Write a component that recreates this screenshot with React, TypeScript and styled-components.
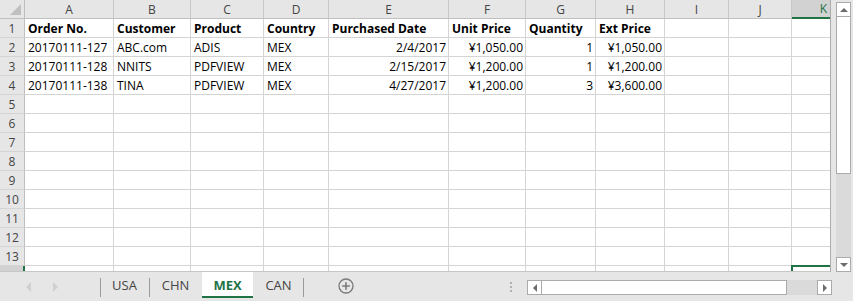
import styled, { createGlobalStyle, css } from 'styled-components'

const GlobalStyle = createGlobalStyle`
  html, body {
    margin: 0;
    padding: 0;
    background: #ffffff;
  }
  body {
    font-family: 'Segoe UI', 'Open Sans', 'Noto Sans', sans-serif;
  }
`

const GREEN = '#217346'

const columns = [
  { key: 'A', width: 89 },
  { key: 'B', width: 77 },
  { key: 'C', width: 73 },
  { key: 'D', width: 65 },
  { key: 'E', width: 120 },
  { key: 'F', width: 77 },
  { key: 'G', width: 70 },
  { key: 'H', width: 69 },
  { key: 'I', width: 64 },
  { key: 'J', width: 63 },
  { key: 'K', width: 39 },
]

type Cell = { text: string; right?: boolean }

const rows: Cell[][] = [
  [
    { text: 'Order No.' },
    { text: 'Customer' },
    { text: 'Product' },
    { text: 'Country' },
    { text: 'Purchased Date' },
    { text: 'Unit Price' },
    { text: 'Quantity' },
    { text: 'Ext Price' },
  ],
  [
    { text: '20170111-127' },
    { text: 'ABC.com' },
    { text: 'ADIS' },
    { text: 'MEX' },
    { text: '2/4/2017', right: true },
    { text: '¥1,050.00', right: true },
    { text: '1', right: true },
    { text: '¥1,050.00', right: true },
  ],
  [
    { text: '20170111-128' },
    { text: 'NNITS' },
    { text: 'PDFVIEW' },
    { text: 'MEX' },
    { text: '2/15/2017', right: true },
    { text: '¥1,200.00', right: true },
    { text: '1', right: true },
    { text: '¥1,200.00', right: true },
  ],
  [
    { text: '20170111-138' },
    { text: 'TINA' },
    { text: 'PDFVIEW' },
    { text: 'MEX' },
    { text: '4/27/2017', right: true },
    { text: '¥1,200.00', right: true },
    { text: '3', right: true },
    { text: '¥3,600.00', right: true },
  ],
]

const tabs = [
  { name: 'USA', width: 49 },
  { name: 'CHN', width: 53 },
  { name: 'MEX', width: 51 },
  { name: 'CAN', width: 51 },
]
const ACTIVE_TAB = 'MEX'
const ROW_COUNT = 14

const App = () => {
  return (
    <>
      <GlobalStyle />
      <Window>
        <Main>
          <Sheet>
            <Grid $cols={columns.map((c) => c.width)}>
              <Corner>
                <CornerTriangle />
              </Corner>
              {columns.map((c) => (
                <ColHeader key={c.key} $selected={c.key === 'K'}>
                  {c.key}
                </ColHeader>
              ))}
              {Array.from({ length: ROW_COUNT }).map((_, r) => {
                const data = rows[r] || []
                const rowNo = r + 1
                return [
                  <RowHeader key={`h${rowNo}`} $selected={rowNo === 14}>
                    {rowNo}
                  </RowHeader>,
                  ...columns.map((c, ci) => {
                    const cell = data[ci]
                    return (
                      <DataCell
                        key={`${rowNo}-${c.key}`}
                        $bold={rowNo === 1}
                        $right={!!cell?.right}
                        $active={rowNo === 14 && c.key === 'K'}
                      >
                        {cell?.text}
                      </DataCell>
                    )
                  }),
                ]
              })}
            </Grid>
          </Sheet>
          <VScroll>
            <ScrollButton>
              <ArrowUp />
            </ScrollButton>
            <VThumb />
            <VTrack />
            <ScrollButton>
              <ArrowDown />
            </ScrollButton>
          </VScroll>
        </Main>
        <TabBar>
          <NavArrows>
            <NavLeft />
            <NavRight />
          </NavArrows>
          <Tabs>
            {tabs.map((t) => (
              <Tab key={t.name} $width={t.width} $active={t.name === ACTIVE_TAB}>
                {t.name}
              </Tab>
            ))}
          </Tabs>
          <AddSheet>
            <svg width="16" height="16" viewBox="0 0 16 16">
              <circle cx="8" cy="8" r="7" fill="none" stroke="#7a7a7a" strokeWidth="1.3" />
              <path d="M8 4.2v7.6M4.2 8h7.6" stroke="#7a7a7a" strokeWidth="1.6" />
            </svg>
          </AddSheet>
          <Spacer />
          <Splitter>
            <Dot />
            <Dot />
            <Dot />
          </Splitter>
          <HScroll>
            <HButton>
              <ArrowLeft />
            </HButton>
            <HThumb />
            <HTrack />
            <HButton>
              <ArrowRight />
            </HButton>
          </HScroll>
          <TailGap />
        </TabBar>
      </Window>
    </>
  )
}

export default App

const Window = styled.div`
  width: 853px;
  height: 301px;
  display: flex;
  flex-direction: column;
  background: #e6e6e6;
  overflow: hidden;
`

const Main = styled.div`
  display: flex;
  height: 272px;
  flex: none;
`

const Sheet = styled.div`
  width: 831px;
  height: 272px;
  overflow: hidden;
  background: #ffffff;
  border-right: 1px solid #ababab;
  border-bottom: 1px solid #c6c6c6;
  box-sizing: border-box;
`

const Grid = styled.div<{ $cols: number[] }>`
  display: grid;
  grid-template-columns: 25px ${(p) => p.$cols.map((w) => `${w}px`).join(' ')};
  grid-template-rows: 19px;
  grid-auto-rows: 19px;
  width: 831px;
`

const headerBase = css`
  background: #e6e6e6;
  color: #444444;
  font-size: 12px;
  display: flex;
  align-items: center;
  justify-content: center;
  box-sizing: border-box;
`

const Corner = styled.div`
  ${headerBase};
  position: relative;
  border-right: 1px solid #bfbfbf;
  border-bottom: 1px solid #bfbfbf;
`

const CornerTriangle = styled.div`
  position: absolute;
  right: 3px;
  bottom: 3px;
  width: 0;
  height: 0;
  border-left: 11px solid transparent;
  border-bottom: 11px solid #bfbfbf;
`

const ColHeader = styled.div<{ $selected?: boolean }>`
  ${headerBase};
  border-right: 1px solid #c8c8c8;
  border-bottom: 1px solid #bfbfbf;
  ${(p) =>
    p.$selected &&
    css`
      background: #d2d2d2;
      color: ${GREEN};
      border-bottom: 2px solid ${GREEN};
      justify-content: flex-end;
      padding-right: 3px;
    `}
`

const RowHeader = styled.div<{ $selected?: boolean }>`
  ${headerBase};
  border-right: 1px solid #bfbfbf;
  border-bottom: 1px solid #d4d4d4;
  ${(p) =>
    p.$selected &&
    css`
      background: #d2d2d2;
      color: ${GREEN};
      border-right: 2px solid ${GREEN};
    `}
`

const DataCell = styled.div<{ $bold?: boolean; $right?: boolean; $active?: boolean }>`
  box-sizing: border-box;
  border-right: 1px solid #d4d4d4;
  border-bottom: 1px solid #d4d4d4;
  font-size: 12px;
  color: #000000;
  padding: 1px 2px 0 3px;
  display: flex;
  align-items: center;
  white-space: nowrap;
  overflow: hidden;
  justify-content: ${(p) => (p.$right ? 'flex-end' : 'flex-start')};
  font-weight: ${(p) => (p.$bold ? 700 : 400)};
  ${(p) =>
    p.$active &&
    css`
      border-top: 2px solid ${GREEN};
      border-left: 2px solid ${GREEN};
      margin-top: -1px;
      margin-left: -1px;
    `}
`

const VScroll = styled.div`
  width: 22px;
  display: flex;
  flex-direction: column;
  align-items: center;
  padding: 2px 0 0 3px;
  box-sizing: border-box;
  background: #e6e6e6;
`

const buttonBase = css`
  width: 15px;
  height: 15px;
  box-sizing: border-box;
  background: #ffffff;
  border: 1px solid #ababab;
  display: flex;
  align-items: center;
  justify-content: center;
  flex: none;
`

const ScrollButton = styled.div`
  ${buttonBase};
`

const VThumb = styled.div`
  width: 15px;
  height: 157px;
  box-sizing: border-box;
  background: #ffffff;
  border: 1px solid #ababab;
  border-top: none;
  flex: none;
`

const VTrack = styled.div`
  width: 15px;
  flex: 1;
  background: #dadada;
`

const ArrowUp = styled.div`
  width: 0;
  height: 0;
  border-left: 4px solid transparent;
  border-right: 4px solid transparent;
  border-bottom: 4px solid #6d6d6d;
`

const ArrowDown = styled.div`
  width: 0;
  height: 0;
  border-left: 4px solid transparent;
  border-right: 4px solid transparent;
  border-top: 4px solid #6d6d6d;
`

const ArrowLeft = styled.div`
  width: 0;
  height: 0;
  border-top: 4px solid transparent;
  border-bottom: 4px solid transparent;
  border-right: 4px solid #6d6d6d;
`

const ArrowRight = styled.div`
  width: 0;
  height: 0;
  border-top: 4px solid transparent;
  border-bottom: 4px solid transparent;
  border-left: 4px solid #6d6d6d;
`

const TabBar = styled.div`
  flex: 1;
  display: flex;
  align-items: stretch;
  background: #e6e6e6;
`

const NavArrows = styled.div`
  width: 100px;
  display: flex;
  align-items: center;
  padding-left: 26px;
  gap: 22px;
  box-sizing: border-box;
`

const NavLeft = styled.div`
  width: 0;
  height: 0;
  border-top: 5px solid transparent;
  border-bottom: 5px solid transparent;
  border-right: 5px solid #cfcfcf;
`

const NavRight = styled.div`
  width: 0;
  height: 0;
  border-top: 5px solid transparent;
  border-bottom: 5px solid transparent;
  border-left: 5px solid #cfcfcf;
`

const Tabs = styled.div`
  display: flex;
  align-items: flex-start;
`

const Tab = styled.div<{ $active?: boolean; $width: number }>`
  position: relative;
  width: ${(p) => p.$width}px;
  height: 26px;
  display: flex;
  align-items: center;
  justify-content: center;
  font-size: 13px;
  color: #444444;
  box-sizing: border-box;
  &::before {
    content: '';
    position: absolute;
    left: 0;
    top: 6px;
    height: 19px;
    width: 1px;
    background: #9b9b9b;
  }
  &:last-child::after {
    content: '';
    position: absolute;
    right: 0;
    top: 6px;
    height: 19px;
    width: 1px;
    background: #9b9b9b;
  }
  ${(p) =>
    p.$active &&
    css`
      background: #ffffff;
      color: ${GREEN};
      font-weight: 700;
      border-bottom: 2px solid ${GREEN};
      padding-top: 2px;
      &::before {
        display: none;
      }
      & + *::before {
        display: none;
      }
    `}
`

const AddSheet = styled.div`
  display: flex;
  align-items: center;
  padding-left: 34px;
  padding-bottom: 1px;
`

const Spacer = styled.div`
  flex: 1;
`

const Splitter = styled.div`
  display: flex;
  flex-direction: column;
  justify-content: center;
  gap: 2px;
  padding-right: 15px;
`

const Dot = styled.div`
  width: 2px;
  height: 2px;
  background: #b0b0b0;
`

const HScroll = styled.div`
  display: flex;
  align-items: flex-start;
  padding-top: 8px;
`

const HButton = styled.div`
  ${buttonBase};
`

const HThumb = styled.div`
  width: 245px;
  height: 15px;
  box-sizing: border-box;
  background: #ffffff;
  border: 1px solid #ababab;
  border-left: none;
`

const HTrack = styled.div`
  width: 30px;
  height: 15px;
  background: #dadada;
`

const TailGap = styled.div`
  width: 21px;
`
